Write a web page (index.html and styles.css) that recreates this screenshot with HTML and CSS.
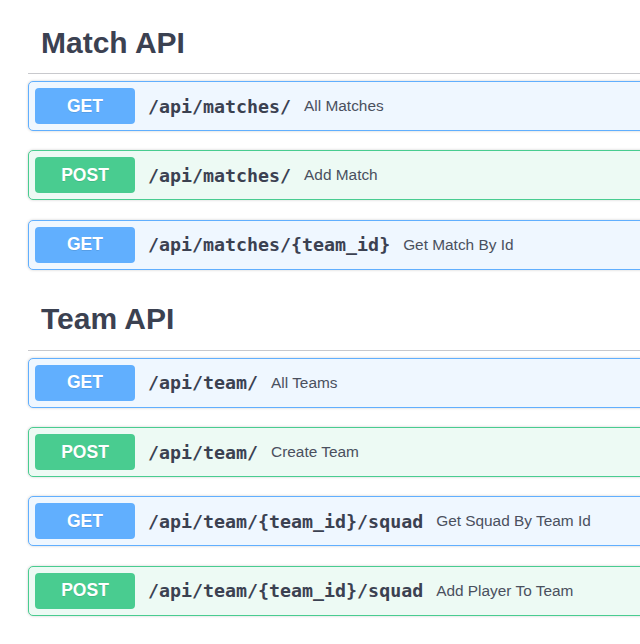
FILE: index.html
```html
<!DOCTYPE html>
<html>
<head>
<meta charset="utf-8">
<link rel="stylesheet" href="styles.css">
</head>
<body>
<div class="page">
  <section class="tag-section">
    <h4 class="tag"><span>Match API</span></h4>
    <div class="opblock get">
      <span class="method">GET</span>
      <span class="path">/api/matches/</span>
      <span class="desc">All Matches</span>
    </div>
    <div class="opblock post">
      <span class="method">POST</span>
      <span class="path">/api/matches/</span>
      <span class="desc">Add Match</span>
    </div>
    <div class="opblock get">
      <span class="method">GET</span>
      <span class="path">/api/matches/{team_id}</span>
      <span class="desc">Get Match By Id</span>
    </div>
  </section>
  <section class="tag-section">
    <h4 class="tag"><span>Team API</span></h4>
    <div class="opblock get">
      <span class="method">GET</span>
      <span class="path">/api/team/</span>
      <span class="desc">All Teams</span>
    </div>
    <div class="opblock post">
      <span class="method">POST</span>
      <span class="path">/api/team/</span>
      <span class="desc">Create Team</span>
    </div>
    <div class="opblock get">
      <span class="method">GET</span>
      <span class="path">/api/team/{team_id}/squad</span>
      <span class="desc">Get Squad By Team Id</span>
    </div>
    <div class="opblock post">
      <span class="method">POST</span>
      <span class="path">/api/team/{team_id}/squad</span>
      <span class="desc">Add Player To Team</span>
    </div>
  </section>
</div>
</body>
</html>
```
FILE: styles.css
```css
html, body {
  margin: 0;
  padding: 0;
  background: #fff;
  overflow: hidden;
}
.page {
  width: 800px;
  padding: 12px 0 0 28px;
  font-family: "Liberation Sans", Arial, sans-serif;
  color: #3b4151;
}
.tag-section {
  margin: 0;
}
.tag {
  margin: 0 0 7px;
  height: 61px;
  display: flex;
  align-items: center;
  padding-left: 13px;
  border-bottom: 1px solid #c8c9cd;
  font-size: 30px;
  font-weight: 700;
  color: #3b4151;
}
.opblock {
  display: flex;
  align-items: center;
  height: 36px;
  padding: 6px;
  margin: 0 0 19.3px;
  border: 1px solid;
  border-radius: 5px;
  box-shadow: 0 0 3px rgba(0, 0, 0, 0.19);
}
.opblock.get {
  background: #eff7ff;
  border-color: #61affe;
}
.opblock.post {
  background: #edfaf4;
  border-color: #49cc90;
}
.method {
  width: 100px;
  height: 36px;
  flex: none;
  display: flex;
  align-items: center;
  justify-content: center;
  border-radius: 4px;
  color: #fff;
  font-size: 17.5px;
  font-weight: 700;
  text-shadow: 0 1px 0 rgba(0, 0, 0, 0.1);
}
.get .method { background: #61affe; }
.post .method { background: #49cc90; }
.path {
  padding: 0 13px;
  font-family: "DejaVu Sans Mono", monospace;
  font-weight: 700;
  font-size: 18.3px;
  color: #3b4151;
}
.desc {
  font-size: 15.4px;
  color: #4a505e;
}
```
